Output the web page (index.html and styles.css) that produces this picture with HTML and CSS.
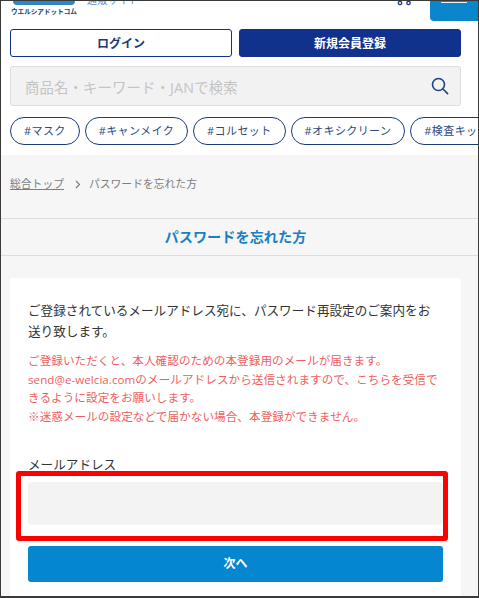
FILE: index.html
```html
<!DOCTYPE html>
<html>
<head>
    <title>パスワードを忘れた方</title>
    <link rel="stylesheet" href="styles.css">
</head>
<body>
    <div class="frame">
        <div class="header">
            <div class="logo">
                <div class="logo-mark"></div>
                <div class="logo-text">ウエルシアドットコム</div>
            </div>
            <div class="site-name">通販サイト</div>
            <svg class="cart" width="16" height="5" viewBox="0 0 16 5">
                <circle cx="3" cy="2" r="1.7" fill="none" stroke="#1d3a85" stroke-width="1.3"/>
                <circle cx="11.5" cy="2" r="1.7" fill="none" stroke="#1d3a85" stroke-width="1.3"/>
            </svg>
            <div class="menu-btn"><span class="menu-line"></span></div>
        </div>
        <div class="auth">
            <a class="auth-btn login">ログイン</a>
            <a class="auth-btn register">新規会員登録</a>
        </div>
        <div class="search">
            <span class="search-text">商品名・キーワード・JANで検索</span>
            <svg width="18" height="18" viewBox="0 0 18 18">
                <circle cx="7.5" cy="7.5" r="6" fill="none" stroke="#1d4485" stroke-width="1.6"/>
                <path d="M12 12l4.6 4.6" fill="none" stroke="#1d4485" stroke-width="1.6" stroke-linecap="round"/>
            </svg>
        </div>
        <div class="tags">
            <a class="tag">#マスク</a>
            <a class="tag">#キャンメイク</a>
            <a class="tag">#コルセット</a>
            <a class="tag">#オキシクリーン</a>
            <a class="tag">#検査キット</a>
        </div>
        <div class="main">
            <div class="breadcrumb">
                <a class="crumb-link">総合トップ</a>
                <svg width="6" height="9" viewBox="0 0 6 9">
                    <path d="M1 1l3.500 3.500L1 8" fill="none" stroke="#777" stroke-width="1.100"/>
                </svg>
                <span>パスワードを忘れた方</span>
            </div>
            <h1 class="page-title">パスワードを忘れた方</h1>
            <div class="card">
                <p class="lead">ご登録されているメールアドレス宛に、パスワード再設定のご案内をお送り致します。</p>
                <p class="notice">ご登録いただくと、本人確認のための本登録用のメールが届きます。<br>send@e-welcia.comのメールアドレスから送信されますので、こちらを受信できるように設定をお願いします。<br>※迷惑メールの設定などで届かない場合、本登録ができません。</p>
                <div class="field-label">メールアドレス</div>
                <div class="field">
                    <div class="input"></div>
                    <div class="highlight"></div>
                </div>
                <a class="next-btn">次へ</a>
            </div>
        </div>
    </div>
</body>
</html>
```

FILE: styles.css
```css
* {
    margin: 0;
    padding: 0;
    box-sizing: border-box;
}
html, body {
    height: 100%;
    overflow: hidden;
}
body {
    font-family: "Open Sans", "Noto Sans CJK JP", sans-serif;
    background: #fff;
    color: #333;
}
.frame {
    height: 598px;
    border: 1px solid #3a3a3a;
    border-bottom-width: 2px;
    overflow: hidden;
}
.header {
    height: 20px;
    display: flex;
    padding-left: 10px;
}
.logo {
    width: 66px;
    margin-right: 10px;
}
.logo-mark {
    width: 62px;
    height: 4px;
    margin-left: 2px;
    background: #2f86c1;
    border-radius: 0 0 14px 14px;
}
.logo-text {
    margin-top: 2px;
    font-size: 6.600px;
    line-height: 9px;
    font-weight: 700;
    color: #1d3a6e;
    white-space: nowrap;
}
.site-name {
    margin-top: -8px;
    font-size: 10px;
    line-height: 14px;
    height: 14px;
    color: #4a90c8;
    letter-spacing: 0.4px;
}
.cart {
    margin-left: auto;
    margin-right: 17px;
}
.menu-btn {
    width: 48px;
    height: 20px;
    background: #0a87cc;
    border-bottom-left-radius: 4px;
    padding: 1px 11px 0 11px;
}
.menu-line {
    display: block;
    height: 1px;
    background: #e8f4fb;
}
.auth {
    display: flex;
    gap: 7px;
    width: 451px;
    margin: 8px 0 0 9px;
}
.auth-btn {
    flex: 1;
    height: 28px;
    line-height: 27px;
    text-align: center;
    font-size: 12px;
    font-weight: 700;
    border: 1px solid #10318c;
    border-radius: 3px;
}
.login {
    background: #fff;
    color: #1d3a75;
}
.register {
    background: #10318c;
    color: #fff;
}
.search {
    width: 451px;
    height: 40px;
    margin: 9px 0 0 9px;
    padding: 0 11px 0 14px;
    display: flex;
    align-items: center;
    justify-content: space-between;
    background: #f2f2f2;
    border: 1px solid #ddd;
    border-radius: 3px;
}
.search-text {
    font-size: 14.300px;
    letter-spacing: 0.2px;
    color: #c4c4c4;
}
.tags {
    display: flex;
    gap: 5px;
    height: 38px;
    margin: 11px 0 0 9px;
    overflow: hidden;
}
.tag {
    flex: none;
    height: 28px;
    line-height: 26px;
    padding: 0 13px;
    font-size: 11px;
    letter-spacing: 0.4px;
    color: #2a4a80;
    background: #fff;
    border: 1px solid #1d3a75;
    border-radius: 14px;
    white-space: nowrap;
}
.main {
    background: #f6f6f6;
    height: 443px;
}
.breadcrumb {
    height: 63px;
    padding: 20px 0 0 9px;
    display: flex;
    align-items: flex-start;
    gap: 8px;
    font-size: 10.800px;
    line-height: 18px;
    color: #7d7d7d;
}
.breadcrumb svg {
    margin: 5px 0 0 3px;
}
.crumb-link {
    text-decoration: underline;
}
.page-title {
    height: 38px;
    line-height: 36px;
    padding-right: 8px;
    text-align: center;
    font-size: 14.200px;
    font-weight: 700;
    color: #1a80c2;
    border-top: 1px solid #ddd;
    border-bottom: 1px solid #ddd;
}
.card {
    width: 451px;
    margin: 22px 0 0 9px;
    padding: 22px 18px 0;
    height: 340px;
    background: #fff;
    border-radius: 3px;
}
.lead {
    max-width: 408px;
    font-size: 12.600px;
    line-height: 21px;
}
.notice {
    margin-top: 10px;
    font-size: 11.600px;
    letter-spacing: 0.05px;
    line-height: 18.700px;
    color: #ee5f5f;
}
.field-label {
    margin-top: 29px;
    font-size: 12.600px;
    line-height: 18px;
}
.field {
    position: relative;
    margin-top: 8px;
}
.input {
    height: 43px;
    background: #f3f3f3;
    border-radius: 4px;
}
.highlight {
    position: absolute;
    top: -11px;
    right: -5px;
    bottom: -16px;
    left: -12px;
    border: 5px solid #f00;
    border-radius: 3px;
}
.next-btn {
    display: block;
    margin-top: 21px;
    height: 36px;
    line-height: 36px;
    text-align: center;
    font-size: 12px;
    font-weight: 700;
    color: #fff;
    background: #0587d0;
    border-radius: 3px;
}
```
